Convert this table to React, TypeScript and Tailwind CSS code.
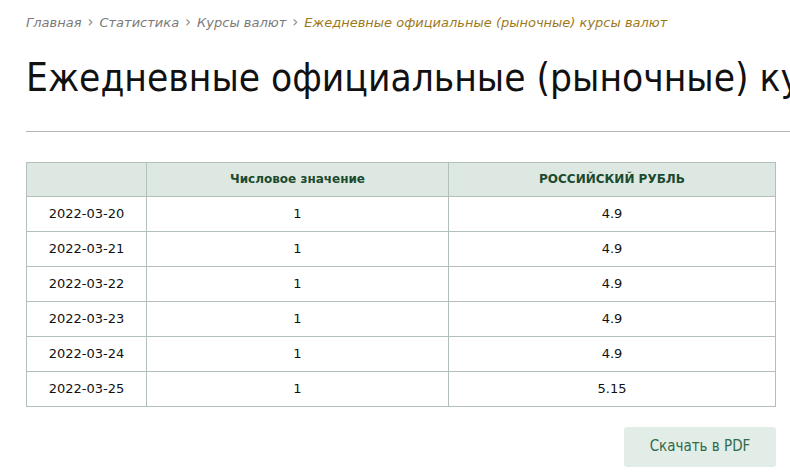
import React from 'react';

const rows = [
  { date: '2022-03-20', num: '1', rub: '4.9' },
  { date: '2022-03-21', num: '1', rub: '4.9' },
  { date: '2022-03-22', num: '1', rub: '4.9' },
  { date: '2022-03-23', num: '1', rub: '4.9' },
  { date: '2022-03-24', num: '1', rub: '4.9' },
  { date: '2022-03-25', num: '1', rub: '5.15' },
];

const Sep = () => <span className="not-italic text-[15px] leading-none text-[#8a8a8a]">›</span>;

const App: React.FC = () => {
  return (
    <div className="w-[790px] h-[474px] overflow-hidden bg-white font-['DejaVu_Sans',sans-serif] text-[#111]">
      <div className="w-[820px] pl-[26px]">
        {/* breadcrumb */}
        <nav className="pt-[13px] flex items-center gap-[6px] text-[13px] italic text-[#7a7a7a] whitespace-nowrap">
          <span>Главная</span>
          <Sep />
          <span>Статистика</span>
          <Sep />
          <span>Курсы валют</span>
          <Sep />
          <span className="text-[#9c7a1c]">Ежедневные официальные (рыночные) курсы валют</span>
        </nav>

        <h1 className="mt-[21px] text-[38.5px] leading-[48px] whitespace-nowrap font-['DejaVu_Sans_Condensed','DejaVu_Sans',sans-serif]">
          Ежедневные официальные (рыночные) курсы валют
        </h1>

        <div className="mt-[29px] h-px bg-[#b4b4b4]" />

        {/* table */}
        <table className="mt-[30px] w-[750px] border-collapse text-[13px] text-center">
          <thead>
            <tr className="bg-[#dce8e1] text-[#1c4a2f] font-bold text-[12px]">
              <th className="w-[120px] h-[34px] border border-[#b3c0ba]"></th>
              <th className="w-[302px] border border-[#b3c0ba]">Числовое значение</th>
              <th className="border border-[#b3c0ba]">РОССИЙСКИЙ РУБЛЬ</th>
            </tr>
          </thead>
          <tbody>
            {rows.map((r) => (
              <tr key={r.date}>
                <td className="h-[35px] border border-[#b3c0ba]">{r.date}</td>
                <td className="border border-[#b3c0ba]">{r.num}</td>
                <td className="border border-[#b3c0ba]">{r.rub}</td>
              </tr>
            ))}
          </tbody>
        </table>

        <div className="w-[750px] flex justify-end mt-[20px]">
          <button className="w-[152px] h-[40px] rounded-[3px] bg-[#e3ede8] text-[#2f6b48] text-[15px] font-['DejaVu_Sans_Condensed','DejaVu_Sans',sans-serif]">
            Скачать в PDF
          </button>
        </div>
      </div>
    </div>
  );
};

export default App;
